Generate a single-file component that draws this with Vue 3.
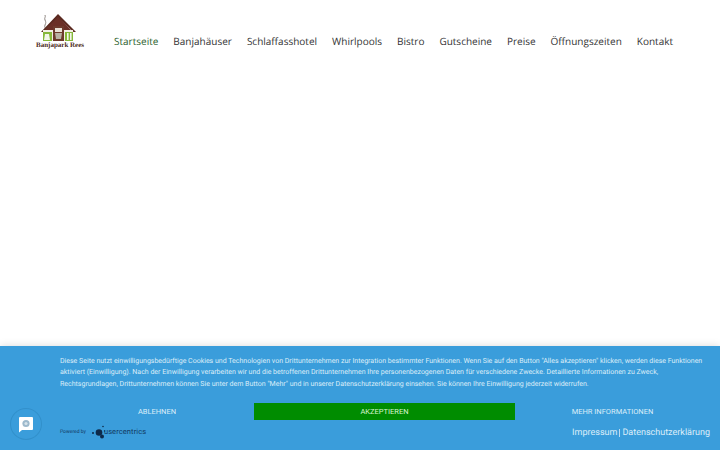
<template>
  <div class="page">
    <header class="header">
      <a class="logo" aria-label="Banjapark Rees">
        <svg class="logo-art" width="50" height="30" viewBox="0 0 50 30">
          <path d="M10 3c1 2-1 3 0 5s1 3 0 5 1 3 0 5" fill="none" stroke="#8d8580" stroke-width="1" />
          <path d="M6 20 23 2l18 18-2.500 0L23 6 8.500 20z" fill="#5b2a20" />
          <path d="M23 5 10 18h26z" fill="#6a2f26" />
          <rect x="8" y="18" width="30" height="11" fill="#f4f0e6" />
          <rect x="8" y="20" width="9" height="9" fill="#86b83a" />
          <rect x="30" y="20" width="8" height="9" fill="#86b83a" />
          <path d="M10 22h4l1 6h-6z" fill="#f2f6e8" />
          <rect x="32" y="21" width="1.600" height="7" fill="#f2f6e8" />
          <rect x="35" y="21" width="1.600" height="7" fill="#f2f6e8" />
          <rect x="18" y="14" width="11" height="15" fill="#6d3a2c" />
          <rect x="20" y="16" width="7" height="4" fill="#e9e2d6" />
          <path d="M20 21h7l-1 6h-5z" fill="#b9b2a4" />
        </svg>
        <span class="logo-name">Banjapark Rees</span>
      </a>
      <nav class="nav">
        <a v-for="(item, i) in items" :key="item" class="nav-item" :class="{ active: i === 0 }">{{ item }}</a>
      </nav>
    </header>
    <main class="content"></main>

    <div class="float-btn">
      <span class="float-inner">
        <svg width="16" height="17" viewBox="0 0 16 17">
          <path d="M2 1h12a1 1 0 0 1 1 1v11a1 1 0 0 1-1 1H4l-3 2.500V2a1 1 0 0 1 1-1z" fill="#fff" />
          <circle cx="8" cy="7.500" r="3.600" fill="#9db9cc" />
          <circle cx="8" cy="7.500" r="1.600" fill="#d5e2ea" />
        </svg>
      </span>
    </div>

    <section class="banner">
      <p class="message">Diese Seite nutzt einwilligungsbedürftige Cookies und Technologien von Drittunternehmen zur Integration bestimmter Funktionen. Wenn Sie auf den Button "Alles akzeptieren" klicken, werden diese Funktionen aktiviert (Einwilligung). Nach der Einwilligung verarbeiten wir und die betroffenen Drittunternehmen Ihre personenbezogenen Daten für verschiedene Zwecke. Detaillierte Informationen zu Zweck, Rechtsgrundlagen, Drittunternehmen können Sie unter dem Button "Mehr" und in unserer Datenschutzerklärung einsehen. Sie können Ihre Einwilligung jederzeit widerrufen.</p>
      <div class="actions">
        <button class="btn">ABLEHNEN</button>
        <button class="btn accept">AKZEPTIEREN</button>
        <button class="btn">MEHR INFORMATIONEN</button>
      </div>
      <div class="foot">
        <div class="powered">
          <span class="powered-by">Powered by</span>
          <svg class="uc-mark" width="16" height="14" viewBox="0 0 16 14">
            <circle cx="7" cy="7.500" r="3.300" fill="#0d2a4a" />
            <circle cx="1" cy="8" r="1" fill="#0d2a4a" />
            <circle cx="11" cy="1.500" r="0.800" fill="#0d2a4a" />
            <circle cx="10" cy="11.500" r="2" fill="#0d2a4a" />
            <circle cx="12.500" cy="6" r="0.700" fill="#0d2a4a" />
          </svg>
          <span class="uc-name">usercentrics</span>
        </div>
        <div class="links"><a>Impressum</a><span class="sep"></span><a>Datenschutzerklärung</a></div>
      </div>
    </section>
  </div>
</template>

<script setup>
const items = ['Startseite', 'Banjahäuser', 'Schlaffasshotel', 'Whirlpools', 'Bistro', 'Gutscheine', 'Preise', 'Öffnungszeiten', 'Kontakt']
</script>

<style>
html, body { margin: 0; background: #fff; }
</style>

<style scoped>
.page {
  position: relative;
  width: 720px;
  height: 450px;
  overflow: hidden;
  display: flex;
  flex-direction: column;
  background: #fff;
  font-family: Roboto, "Liberation Sans", sans-serif;
  text-rendering: geometricPrecision;
}
.header {
  display: flex;
  align-items: flex-start;
  padding: 12px 0 0 35px;
}
.logo {
  width: 50px;
  display: flex;
  flex-direction: column;
  align-items: center;
}
.logo-art { display: block; }
.logo-name {
  margin-top: -1px;
  font-family: "Liberation Serif", serif;
  font-weight: 700;
  font-size: 7px;
  line-height: 8px;
  color: #4a2a20;
  white-space: nowrap;
}
.nav {
  display: flex;
  gap: 15px;
  margin-left: 29px;
  padding-top: 20px;
}
.nav-item {
  font-family: "Open Sans", sans-serif;
  font-size: 10px;
  line-height: 18px;
  color: #333;
  white-space: nowrap;
}
.nav-item.active { color: #2d5f2d; }
.content { flex: 1; }
.banner {
  box-sizing: border-box;
  height: 104px;
  padding: 10px 10px 0 60px;
  background: #3a9ddb;
  color: #dcedf9;
  box-shadow: 0 0 8px rgba(0, 0, 0, 0.15);
}
.message {
  margin: 0;
  width: 646px;
  font-size: 7px;
  line-height: 11.300px;
}
.actions {
  display: grid;
  grid-template-columns: 194px 261px 195px;
  margin-top: 13px;
}
.btn {
  height: 17px;
  padding: 0;
  border: 0;
  background: transparent;
  color: #dcedf9;
  font-family: Roboto, sans-serif;
  font-size: 7.500px;
}
.accept { background: #008c00; color: #d9f5d0; }
.foot {
  display: flex;
  justify-content: space-between;
  align-items: center;
  margin-top: 5px;
}
.powered { display: flex; align-items: center; margin-bottom: 2px; }
.powered-by { font-size: 5px; color: #123a63; margin-right: 6px; }
.uc-mark { display: block; }
.uc-name { font-size: 7.500px; letter-spacing: 0.100px; color: #123a63; margin-left: -4px; }
.links {
  display: flex;
  align-items: center;
  font-size: 9px;
  color: #dcedf9;
}
.sep { width: 1px; height: 8px; background: #bcdcf2; margin: 0 2px; }
.float-btn {
  position: absolute;
  left: 11px;
  top: 409px;
  z-index: 2;
  width: 30px;
  height: 30px;
  border-radius: 50%;
  background: #3a9ddb;
  box-shadow: 0 0 0 1px #3290cb;
  display: flex;
  align-items: center;
  justify-content: center;
}
.float-inner { display: block; height: 17px; }
</style>
